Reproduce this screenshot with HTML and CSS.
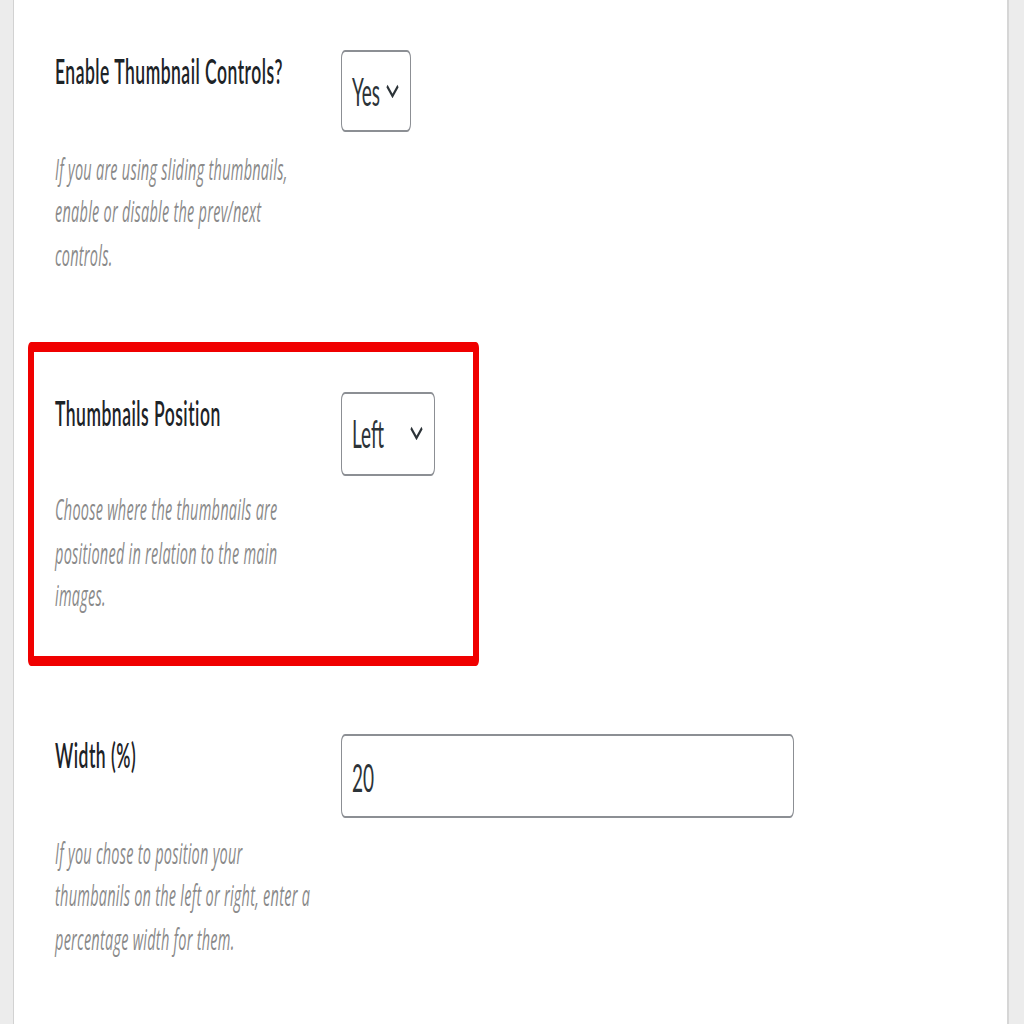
FILE: index.html
```html
<!DOCTYPE html>
<html>
<head>
<meta charset="utf-8">
<link rel="stylesheet" href="styles.css">
</head>
<body>
<div class="screen">
  <div class="panel">
    <div class="row">
      <div class="field">
        <div class="label">Enable Thumbnail Controls?</div>
        <p class="desc">If you are using sliding thumbnails,<br>enable or disable the prev/next<br>controls.</p>
      </div>
      <div class="control">
        <div class="select select-yes">
          <span class="select-value">Yes</span>
          <svg class="chev" viewBox="0 0 13 7" preserveAspectRatio="none"><polyline points="1,1 6.5,6 12,1" fill="none" stroke="#2c3338" stroke-width="1.7"/></svg>
        </div>
      </div>
    </div>
    <div class="row row-hl">
      <div class="field">
        <div class="label">Thumbnails Position</div>
        <p class="desc">Choose where the thumbnails are<br>positioned in relation to the main<br>images.</p>
      </div>
      <div class="control">
        <div class="select select-pos">
          <span class="select-value">Left</span>
          <svg class="chev" viewBox="0 0 13 7" preserveAspectRatio="none"><polyline points="1,1 6.5,6 12,1" fill="none" stroke="#2c3338" stroke-width="1.7"/></svg>
        </div>
      </div>
    </div>
    <div class="row">
      <div class="field">
        <div class="label">Width (%)</div>
        <p class="desc">If you chose to position your<br>thumbanils on the left or right, enter a<br>percentage width for them.</p>
      </div>
      <div class="control">
        <div class="input">20</div>
      </div>
    </div>
  </div>
</div>
</body>
</html>
```
FILE: styles.css
```css
html, body {
  margin: 0;
  padding: 0;
  background: #ececec;
}
body {
  height: 1024px;
  overflow: hidden;
}
.screen {
  width: 1024px;
  height: 512px;
  transform: scaleY(2);
  transform-origin: top left;
  background: #ececec;
  font-family: Lato, "Liberation Sans", sans-serif;
}
.panel {
  box-sizing: border-box;
  margin-left: 13px;
  width: 996px;
  height: 512px;
  background: #ffffff;
  border-left: 1px solid #d2d2d2;
  border-right: 2px solid #d6d6d6;
}
.row {
  box-sizing: border-box;
  height: 171px;
  padding: 25px 0 0 41px;
  display: grid;
  grid-template-columns: 286px auto;
  align-items: start;
}
.row-hl {
  margin-left: 14px;
  width: 451px;
  height: 162px;
  margin-bottom: 9px;
  border-style: solid;
  border-color: #f00000;
  border-width: 5.5px 6px;
  border-radius: 3px;
  padding: 19.5px 0 0 21px;
}
.field {
  display: flex;
  flex-direction: column;
}
.label {
  font-size: 17.5px;
  line-height: 22px;
  padding-top: 0.3px;
  font-weight: 600;
  letter-spacing: 0.5px;
  color: #1d2327;
}
.desc {
  margin: 26.3px 0 0;
  font-family: "Open Sans", Lato, sans-serif;
  font-size: 14.5px;
  line-height: 21.67px;
  letter-spacing: 0.25px;
  font-style: italic;
  color: #8a8a8a;
  white-space: nowrap;
}
.control {
  display: flex;
}
.select {
  box-sizing: border-box;
  height: 41px;
  border: 1px solid #8c8f94;
  border-radius: 4px;
  display: flex;
  align-items: center;
  justify-content: space-between;
  padding: 0 11px 0 10px;
  background: #fff;
}
.select-yes { width: 70px; padding-right: 11.5px; }
.select-pos { width: 94px; height: 42px; }
.select-value {
  font-size: 19px;
  color: #2c3338;
}
.chev {
  flex: none;
  width: 13px;
  height: 7px;
  margin-top: -1px;
}
.input {
  box-sizing: border-box;
  width: 453px;
  height: 42px;
  border: 1px solid #8c8f94;
  border-radius: 4px;
  display: flex;
  align-items: center;
  padding-left: 10px;
  font-size: 19px;
  color: #2c3338;
}
```
